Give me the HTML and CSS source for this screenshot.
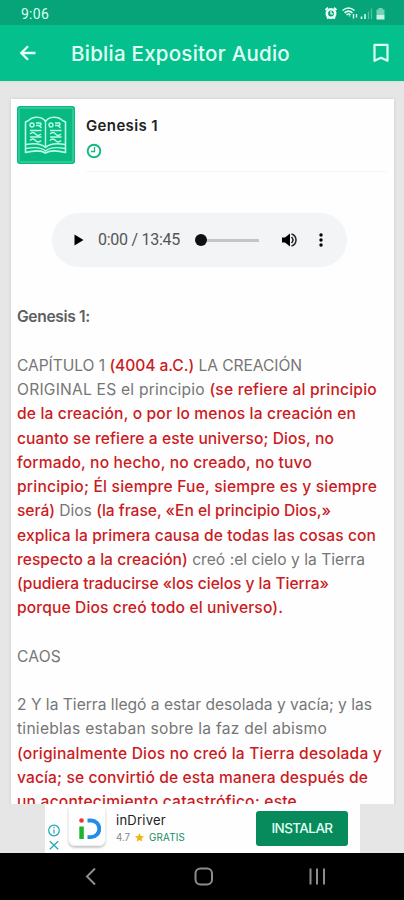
FILE: index.html
```html
<!DOCTYPE html>
<html lang="es">
<head>
<meta charset="utf-8">
<title>Biblia Expositor Audio</title>
<link rel="stylesheet" href="styles.css">
</head>
<body>
<div class="phone">
  <div class="status">
    <span class="clock" data-width="28">9:06</span>
    <svg class="status-icons" width="62" height="16" viewBox="0 0 62 16">
      <g fill="none" stroke="#e6fff5">
        <circle cx="7" cy="8.500" r="4.200" stroke-width="2.600"/>
        <path d="M1.500 5 4 2.700M12.500 5 10 2.700M3 13.500l1.500-1.500M11 13.500l-1.500-1.500" stroke-width="1.800"/>
        <path d="M7 6V8.800h2" stroke-width="1.200"/>
        <path d="M18.500 5.500q6-5 12 0M20.500 7.900q4-3.500 8 0M22.500 10q2-2 4 0" stroke-width="1.500"/>
        <path d="M25.500 11.500v-1M29.500 9v4.500M32.500 9v3.500" stroke-width="1.400"/>
        <path d="M37.500 11.500v2.500M41 9V14" stroke-width="1.500"/>
        <path d="M44.500 6.500V14M47.500 3.500V14" stroke-width="1.300" opacity=".35"/>
      </g>
      <path d="M52.500 4.500h2V3h4v1.500h2V10h-8z" fill="#e6fff5" opacity=".5"/>
      <path d="M52.500 10h8v4.500h-8z" fill="#c6f5e2"/>
    </svg>
  </div>
  <header class="bar">
    <svg class="back" width="18" height="18" viewBox="0 0 18 18"><path d="M16.500 9H2.500M9 2.300 2.300 9 9 15.700" fill="none" stroke="#e4fff5" stroke-width="2.300"/></svg>
    <h1><span data-width="219">Biblia Expositor Audio</span></h1>
    <svg class="mark" width="18" height="20" viewBox="0 0 18 20"><path d="M2.500 1.800h13v16L9 14.800l-6.500 3z" fill="none" stroke="#dcfff2" stroke-width="2.200" stroke-linejoin="round"/></svg>
  </header>
  <main class="page">
    <article class="card">
      <div class="head">
        <svg class="cover" width="58" height="58" viewBox="0 0 58 58">
          <rect width="58" height="58" rx="3" fill="#08b982"/>
          <rect x="2" y="2" width="54" height="54" rx="1.500" fill="none" stroke="#4fdbad" stroke-width="1"/>
          <g fill="none" stroke="#b5ffe4" stroke-width="1.400" stroke-linejoin="round">
            <path d="M28.500 15.500C25 10 16 10 11.500 14.500L8.500 16V46.500q14-3.500 20 .5 6-4 20-.5V16l-3-1.500C41 10 32 10 28.500 15.500z" stroke-width="1.600"/>
            <path d="M28.500 15.500V42M9 38.500q14-2.500 19.500 3 5.500-5.500 19.500-3M9 42.500q14-2.500 19.500 2.500 5.500-5 19.500-2.500"/>
            <circle cx="15" cy="19" r="2"/><circle cx="34" cy="19" r="2"/>
            <path d="M19 17h4.500q1.500 2-1 2.500H19M22 19.500l2.500 2.500M38 17h4.500q1.500 2-1 2.500H38M41 19.500l2.500 2.500"/>
            <path d="M13 24.500h11.500M13 28q3-3 5.500 0t5.500 0M13 31h11.500M13 34.500q3-3 5.500 0t5.500 0M33 24.500h11.500M33 28q3-3 5.500 0t5.500 0M33 31h11.500M33 34.500q3-3 5.500 0t5.500 0"/>
          </g>
        </svg>
        <div class="meta">
          <h2><span data-width="72">Genesis 1</span></h2>
          <svg width="16" height="16" viewBox="0 0 16 16"><circle cx="8" cy="8" r="6.300" fill="none" stroke="#14b984" stroke-width="1.900"/><path d="M8.500 4v4.500H5" fill="none" stroke="#14b984" stroke-width="1.300"/></svg>
        </div>
      </div>
      <div class="player">
        <svg class="play" width="10" height="12" viewBox="0 0 10 12"><path d="M.5.500 9.500 6l-9 5.500z"/></svg>
        <span class="time"><span data-width="82">0:00 / 13:45</span></span>
        <div class="track"><i></i></div>
        <svg class="volume" width="17" height="16" viewBox="0 0 17 16"><path d="M1 5.500h3L9 1.500v13l-5-4H1z"/><path d="M10.500 5q3 3 0 6M10.500 2q4.500 1.500 4.500 6t-4.500 6" fill="none" stroke="#222" stroke-width="1.500"/></svg>
        <svg class="dots" width="4" height="14" viewBox="0 0 4 14"><circle cx="2" cy="2" r="1.700"/><circle cx="2" cy="7" r="1.700"/><circle cx="2" cy="12" r="1.700"/></svg>
      </div>
      <div class="text">
        <p class="title"><span data-width="73">Genesis 1:</span></p>
        <p>
          <span data-width="285">CAPÍTULO 1 <b>(4004 a.C.)</b> LA CREACIÓN</span><br>
          <span data-width="360">ORIGINAL ES el principio <b>(se refiere al principio</b></span><br>
          <b><span data-width="339">de la creación, o por lo menos la creación en</span></b><br>
          <b><span data-width="317">cuanto se refiere a este universo; Dios, no</span></b><br>
          <b><span data-width="295">formado, no hecho, no creado, no tuvo</span></b><br>
          <b><span data-width="360">principio; Él siempre Fue, siempre es y siempre</span></b><br>
          <span data-width="314"><b>será)</b> Dios <b>(la frase, «En el principio Dios,»</b></span><br>
          <b><span data-width="359">explica la primera causa de todas las cosas con</span></b><br>
          <span data-width="348"><b>respecto a la creación)</b> creó :el cielo y la Tierra</span><br>
          <b><span data-width="312">(pudiera traducirse «los cielos y la Tierra»</span></b><br>
          <b><span data-width="266">porque Dios creó todo el universo).</span></b>
        </p>
        <p><span data-width="44">CAOS</span></p>
        <p>
          <span data-width="355">2 Y la Tierra llegó a estar desolada y vacía; y las</span><br>
          <span data-width="310">tinieblas estaban sobre la faz del abismo</span><br>
          <b><span data-width="365">(originalmente Dios no creó la Tierra desolada y</span></b><br>
          <b><span data-width="351">vacía; se convirtió de esta manera después de</span></b><br>
          <b><span data-width="280">un acontecimiento catastrófico; este</span></b>
        </p>
      </div>
    </article>
  </main>
  <div class="ad-row">
    <aside class="ad">
      <svg class="choices" width="12" height="32" viewBox="0 0 12 32"><g fill="none" stroke="#20a5b5" stroke-width="1.200"><circle cx="6" cy="8.500" r="5.300"/><path d="M6 7.500v4M6 4.800v1.500M1.800 19.300l8.400 8M10.200 19.300l-8.400 8"/></g></svg>
      <div class="logo">
        <svg width="22" height="22" viewBox="0 0 22 22"><circle cx="2.500" cy="2.500" r="2.300" fill="#ee3437"/><path d="M.3 8.500h4.500V21H.3z" fill="#1cb52c"/><path d="M8.500 2.500h3.500a8.300 8.300 0 0 1 0 16.600H8.500" fill="none" stroke="#228ce9" stroke-width="3.800"/></svg>
      </div>
      <div class="app">
        <div class="name"><span data-width="50">inDriver</span></div>
        <div class="rating"><span data-width="14">4.7</span><svg width="9" height="9" viewBox="0 0 20 20"><path d="m10 0 3 6.500 7 .8-5.200 4.800 1.400 7L10 15.600l-6.200 3.500 1.400-7L0 7.300l7-.8z" fill="#f4b414"/></svg><em><span data-width="36">GRATIS</span></em></div>
      </div>
      <div class="install"><span data-width="61">INSTALAR</span></div>
    </aside>
  </div>
  <nav class="nav">
    <svg width="404" height="47" viewBox="0 0 404 47" fill="none" stroke="#8d8d8d" stroke-width="2"><path d="m95 15.500-8 8 8 8"/><rect x="195.500" y="15.500" width="16.500" height="16" rx="5"/><path d="M310.500 15.500v16M317 15.500v16M324 15.500v16"/></svg>
  </nav>
</div>
<script src="fit.js"></script>
</body>
</html>
```
FILE: styles.css
```css
* { box-sizing: border-box; }
body { margin: 0; font-family: Inter, "Liberation Sans", sans-serif; background: #e6e6e6; }
svg { display: block; flex: none; }
h1, h2, p { margin: 0; }
[data-width] { white-space: nowrap; }
.phone { width: 404px; height: 900px; display: flex; flex-direction: column; overflow: hidden; background: #e6e6e6; }
.status { flex: none; height: 25px; padding: 2px 18px 0 21px; display: flex; justify-content: space-between; align-items: center; background: #06a478; color: #d9fff1; }
.clock { font: 400 14px/20px Roboto, sans-serif; }
.status-icons { margin-top: -1px; }
.bar { flex: none; height: 56px; padding: 0 14px 0 19px; display: flex; align-items: center; background: #04c08d; color: #e0fff4; }
.bar h1 { flex: 1; margin-left: 34px; padding-top: 1px; font-size: 20.5px; font-weight: 500; line-height: 28px; }
.page { flex: 1; min-height: 0; overflow: hidden; padding: 17px 10px 0 11px; background: #e6e6e6; border-top: 1px solid #dcdedd; }
.card { height: 760px; background: #fefefe; box-shadow: 0 0 3px #c8c8c8; }
.head { height: 73px; padding: 7px 6px 0; display: flex; }
.meta { flex: 1; margin-left: 11px; padding-top: 10px; border-bottom: 1px solid #f6f6f6; }
.meta h2 { font-size: 15px; line-height: 20px; font-weight: 600; color: #222; }
.meta svg { margin: 7px 0 0 0; }
.player { margin: 41px 0 0 41px; width: 295px; height: 54px; padding-left: 22px; border-radius: 27px; display: flex; align-items: center; background: #f2f4f5; }
.time { margin-left: 14px; width: 97px; font: 400 16px/20px Roboto, sans-serif; color: #555; }
.track { width: 64px; height: 12px; display: flex; align-items: center; }
.track::after { content: ""; height: 3px; flex: 1; background: #c4c5c6; }
.track i { width: 12px; height: 12px; border-radius: 50%; background: #101010; }
.volume { margin-left: 22px; }
.dots { margin-left: 21px; }
.text { padding: 38px 0 0 6px; font-size: 15.6px; line-height: 24.22px; color: #767676; }
.text p { margin-bottom: 24.22px; }
.text b { font-weight: 500; color: #cb1b23; }
.text .title { font-weight: 600; color: #5e5e5e; }
.text p + p { position: relative; top: .6px; }
.ad-row { flex: none; height: 49px; padding: 0 44px 0 45px; background: #e6e6e6; }
.ad { height: 49px; display: flex; background: #fefefe; }
.choices { margin: 18px 0 0 3px; }
.logo { width: 38px; height: 38px; margin: 4px 0 0 8px; padding: 10px 0 0 10px; border-radius: 0 0 7px 7px; border: 1px solid #eee; border-top: 0; box-shadow: 0 2px 2px #ccc; }
.app { margin-left: 10px; width: 140px; padding-top: 8px; }
.name { font-size: 13px; line-height: 17px; color: #222; }
.rating { margin-top: 1px; display: flex; align-items: center; gap: 5px; font-size: 9.8px; line-height: 15px; color: #888; }
.rating em { font-style: normal; color: #168c60; }
.install { margin-top: 7px; width: 92px; height: 35px; padding-bottom: 2px; border-radius: 3px; display: flex; align-items: center; justify-content: center; background: #078b5d; color: #e4fff3; font-size: 13.5px; font-weight: 500; }
.nav { flex: none; height: 47px; background: #000; }
```
FILE: fit.js
```javascript
for (const line of document.querySelectorAll("[data-width]")) {
  const spare = Number(line.dataset.width) - line.getBoundingClientRect().width;
  line.style.letterSpacing = spare / line.textContent.length + "px";
}
```
